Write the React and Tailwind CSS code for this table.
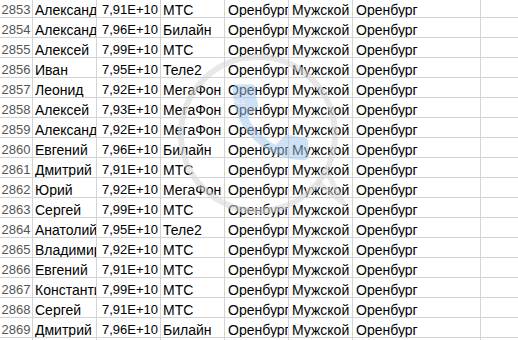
import React from 'react';

const rows = [
  [2853, 'Александр', '7,91E+10', 'МТС'],
  [2854, 'Александр', '7,96E+10', 'Билайн'],
  [2855, 'Алексей', '7,99E+10', 'МТС'],
  [2856, 'Иван', '7,95E+10', 'Теле2'],
  [2857, 'Леонид', '7,92E+10', 'МегаФон'],
  [2858, 'Алексей', '7,93E+10', 'МегаФон'],
  [2859, 'Александр', '7,92E+10', 'МегаФон'],
  [2860, 'Евгений', '7,96E+10', 'Билайн'],
  [2861, 'Дмитрий', '7,91E+10', 'МТС'],
  [2862, 'Юрий', '7,92E+10', 'МегаФон'],
  [2863, 'Сергей', '7,99E+10', 'МТС'],
  [2864, 'Анатолий', '7,95E+10', 'Теле2'],
  [2865, 'Владимир', '7,92E+10', 'МТС'],
  [2866, 'Евгений', '7,91E+10', 'МТС'],
  [2867, 'Константин', '7,99E+10', 'МТС'],
  [2868, 'Сергей', '7,91E+10', 'МТС'],
  [2869, 'Дмитрий', '7,96E+10', 'Билайн'],
];

const cell = 'h-full flex items-end overflow-hidden whitespace-nowrap border-r border-[#d4d4d4] leading-[14px]';

const Row = ({ row }) => {
  const [num, name, phone, op] = row || [];
  return (
    <div className="flex h-[20px] border-b border-[#d4d4d4]">
      <div className={`${cell} w-[33px] justify-center text-[13px] text-[#555]`}>{num}</div>
      <div className={`${cell} w-[64px] px-[2px]`}>{name}</div>
      <div className={`${cell} w-[64px] px-[2px] justify-end text-[13px]`}>{phone}</div>
      <div className={`${cell} w-[64px] px-[2px]`}>{op}</div>
      <div className={`${cell} w-[64px] px-[3px]`}>{row && 'Оренбург'}</div>
      <div className={`${cell} w-[64px] px-[3px]`}>{row && 'Мужской'}</div>
      <div className={`${cell} w-[128px] px-[3px]`}>{row && 'Оренбург'}</div>
      <div className="flex-1" />
    </div>
  );
};

const Watermark = () => (
  <svg className="absolute inset-0 pointer-events-none" width="518" height="340" viewBox="0 0 518 340">
    <circle cx="258" cy="134" r="77" fill="none" stroke="#d6d6d6" strokeOpacity="0.55" strokeWidth="6" />
    <path d="M318 182 L344 204 L328 174" fill="none" stroke="#d6d6d6" strokeOpacity="0.5" strokeWidth="5" strokeLinejoin="round" />
    <g transform="translate(220 72) scale(4.2)" fill="#9fc4ea" fillOpacity="0.5">
      <path d="M6.62 10.79c1.44 2.83 3.76 5.14 6.59 6.59l2.2-2.2c.27-.27.67-.36 1.02-.24 1.12.37 2.33.57 3.57.57.55 0 1 .45 1 1V20c0 .55-.45 1-1 1-9.39 0-17-7.61-17-17 0-.55.45-1 1-1h3.5c.55 0 1 .45 1 1 0 1.25.2 2.45.57 3.57.11.35.03.74-.25 1.02l-2.2 2.2z" />
    </g>
    <text x="232" y="104" fontSize="8" fill="#ffffff" fillOpacity="0.6" fontFamily="Liberation Sans, sans-serif">ALL</text>
    <text x="262" y="104" fontSize="8" fill="#ffffff" fillOpacity="0.6" fontFamily="Liberation Sans, sans-serif">BD</text>
  </svg>
);

export default function App() {
  return (
    <div className="relative w-[518px] h-[340px] overflow-hidden bg-white text-black text-[14px] font-['Liberation_Sans',Arial,sans-serif]">
      <div className="-mt-[2px]">
        {rows.map((r) => (
          <Row key={r[0]} row={r} />
        ))}
        <Row />
      </div>
      <Watermark />
    </div>
  );
}
